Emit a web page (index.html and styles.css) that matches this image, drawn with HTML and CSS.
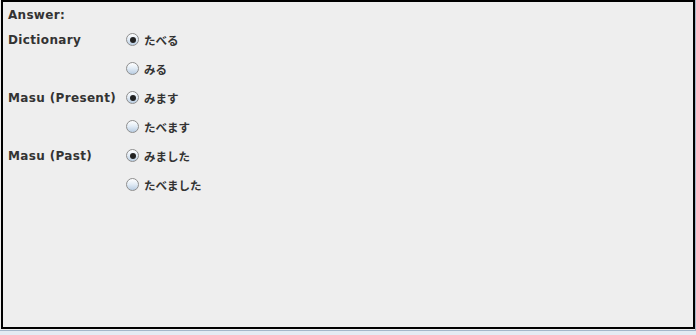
FILE: index.html
```html
<!DOCTYPE html>
<html>
<head>
<meta charset="utf-8">
<link rel="stylesheet" href="styles.css">
</head>
<body>
<div class="window">
  <div class="top">
    <div class="panel">
      <div class="title">Answer:</div>
      <div class="grid">
        <div class="label">Dictionary</div>
        <div class="option"><span class="radio on"></span><span class="jp">たべる</span></div>
        <div class="label"></div>
        <div class="option"><span class="radio"></span><span class="jp">みる</span></div>
        <div class="label">Masu (Present)</div>
        <div class="option"><span class="radio on"></span><span class="jp">みます</span></div>
        <div class="label"></div>
        <div class="option"><span class="radio"></span><span class="jp">たべます</span></div>
        <div class="label">Masu (Past)</div>
        <div class="option"><span class="radio on"></span><span class="jp">みました</span></div>
        <div class="label"></div>
        <div class="option"><span class="radio"></span><span class="jp">たべました</span></div>
      </div>
    </div>
    <div class="edge"></div>
  </div>
  <div class="stripe s1"></div>
  <div class="stripe s2"></div>
</div>
</body>
</html>
```
FILE: styles.css
```css
html, body {
  margin: 0;
  padding: 0;
  background: #eeeeee;
}
.window {
  width: 696px;
  height: 335px;
  overflow: hidden;
  font-family: "DejaVu Sans", "Noto Sans CJK JP", sans-serif;
  font-weight: bold;
  font-size: 12px;
  color: #333333;
}
.top {
  display: flex;
  height: 330px;
}
.panel {
  margin-left: 1px;
  width: 685px;
  height: 325px;
  border: 2px solid #000000;
  background: #eeeeee;
  padding: 0 0 0 5px;
  box-sizing: content-box;
}
.edge {
  margin-left: auto;
  width: 1px;
  height: 330px;
  background: #a4b6c9;
}
.title {
  height: 16px;
  line-height: 16px;
  margin-top: 5px;
  margin-bottom: 2px;
  letter-spacing: 0.3px;
}
.grid {
  display: grid;
  grid-template-columns: 118px auto;
  grid-auto-rows: 29px;
  align-items: center;
}
.label {
  line-height: 16px;
  padding-top: 1px;
  letter-spacing: 0.35px;
}
.option {
  display: flex;
  align-items: center;
  gap: 5px;
}
.jp {
  font-family: "Noto Sans CJK JP", sans-serif;
  font-weight: bold;
  font-size: 11.5px;
  line-height: 16px;
  color: #333333;
  padding-top: 1px;
}
.radio {
  position: relative;
  width: 11px;
  height: 11px;
  border: 1px solid #8e8e8e;
  border-radius: 50%;
  background: linear-gradient(#ffffff 0%, #e4edf6 45%, #b9cde2 100%);
  flex: none;
}
.radio.on::after {
  content: "";
  position: absolute;
  left: 2.5px;
  top: 2.5px;
  width: 6px;
  height: 6px;
  border-radius: 50%;
  background: #222222;
}
.stripe {
  height: 1px;
}
.s1 { background: #a4b6c9; }
.s2 { height: 4px; background: #e4ebf3; }
```
